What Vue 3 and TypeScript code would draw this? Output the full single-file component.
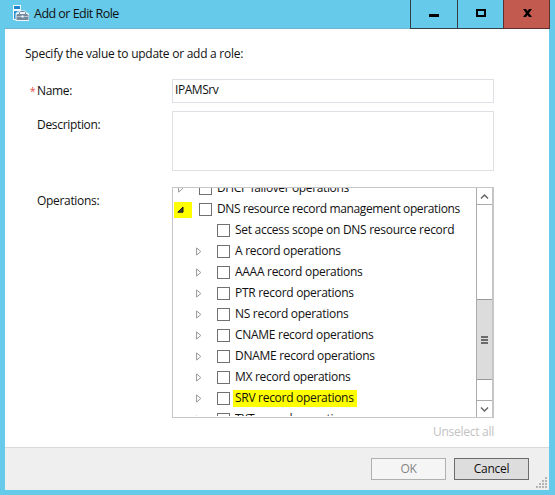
<script setup lang="ts">
import { ref } from 'vue'

interface Operation {
  label: string
  level: 'parent' | 'child'
  state: 'closed' | 'open' | 'leaf'
  marked?: boolean
}

const name = ref('IPAMSrv')
const description = ref('')

const operations: Operation[] = [
  { label: 'DHCP failover operations', level: 'parent', state: 'closed' },
  { label: 'DNS resource record management operations', level: 'parent', state: 'open' },
  { label: 'Set access scope on DNS resource record', level: 'child', state: 'leaf' },
  { label: 'A record operations', level: 'child', state: 'closed' },
  { label: 'AAAA record operations', level: 'child', state: 'closed' },
  { label: 'PTR record operations', level: 'child', state: 'closed' },
  { label: 'NS record operations', level: 'child', state: 'closed' },
  { label: 'CNAME record operations', level: 'child', state: 'closed' },
  { label: 'DNAME record operations', level: 'child', state: 'closed' },
  { label: 'MX record operations', level: 'child', state: 'closed' },
  { label: 'SRV record operations', level: 'child', state: 'closed', marked: true },
  { label: 'TXT record operations', level: 'child', state: 'closed' },
]
</script>

<template>
  <div class="window">
    <header class="titlebar">
      <svg class="app-icon" width="16" height="16" viewBox="0 0 16 16">
        <path d="M0 0H8V6H5L3 9V15H0Z" fill="#f4fbff" />
        <path d="M1 1H7V4H1Z" fill="#1c86d0" />
        <path d="M1 6H5L3 8V14H1Z" fill="#2e91d4" />
        <path d="M2.500 8.500L5.500 7L7.500 5.500H12L13.500 7.500L16 8.500V16H2.500Z" fill="#eef6fa" />
        <path d="M6.500 9V7.500L7.500 6.500H11.500L12.500 7.500V9" fill="none" stroke="#71869b" />
        <path d="M4.500 9H14L15.500 10.500V15H3.500V10Z" fill="#74899e" />
        <path d="M3.500 11.500H15.500" stroke="#c6d2dc" stroke-width=".8" />
        <path d="M8.500 10.500H10.500V12.500H8.500Z" fill="#fff" />
      </svg>
      <h1 class="title">Add or Edit Role</h1>
      <div class="controls">
        <button class="control" aria-label="Minimize">
          <svg width="12" height="12" shape-rendering="crispEdges"><path d="M1 7H11V10H1Z" /></svg>
        </button>
        <button class="control" aria-label="Maximize">
          <svg width="12" height="12" shape-rendering="crispEdges"><path d="M1 2H11V10H1ZM3 4V8H9V4Z" fill-rule="evenodd" /></svg>
        </button>
        <button class="control close" aria-label="Close">
          <svg width="12" height="12"><path d="M2 2H5L6.500 4L8 2H11L8 6L11 10H8L6.500 8L5 10H2L5 6Z" /></svg>
        </button>
      </div>
    </header>

    <main class="body">
      <p class="intro">Specify the value to update or add a role:</p>
      <div class="form">
        <label class="label name-label" for="role-name"><span class="required">*</span>Name:</label>
        <input id="role-name" v-model="name" class="field" type="text" spellcheck="false" />
        <label class="label desc-label" for="role-description">Description:</label>
        <textarea id="role-description" v-model="description" class="field area"></textarea>
        <span class="label ops-label">Operations:</span>
        <div class="tree">
          <ul class="list">
            <li v-for="op in operations" :key="op.label" class="row" :class="op.level">
              <span class="toggle" :class="{ opened: op.state === 'open' }">
                <svg v-if="op.state === 'closed'" width="6" height="9" viewBox="0 0 6 9">
                  <path d="M.6 .9V8.100L4.800 4.500Z" fill="#fff" stroke="#989898" />
                </svg>
                <svg v-else-if="op.state === 'open'" width="7" height="7" viewBox="0 0 7 7">
                  <path d="M.8 6.200H6V1Z" fill="#444" stroke="#161616" />
                </svg>
              </span>
              <span class="check"></span>
              <span class="op" :class="{ marked: op.marked }">{{ op.label }}</span>
            </li>
          </ul>
          <div class="scrollbar">
            <div class="arrow up">
              <svg width="9" height="7"><path d="M1 5.500L4.500 2L8 5.500" /></svg>
            </div>
            <div class="track">
              <div class="thumb"><i></i><i></i><i></i></div>
            </div>
            <div class="arrow down">
              <svg width="9" height="7"><path d="M1 1.500L4.500 5L8 1.500" /></svg>
            </div>
          </div>
        </div>
      </div>
      <div class="unselect"><span>Unselect all</span></div>
    </main>

    <footer class="footer">
      <button class="btn ok" disabled>OK</button>
      <button class="btn cancel">Cancel</button>
      <svg class="grip" width="11" height="11" viewBox="0 0 11 11" fill="#b5b5b5" shape-rendering="crispEdges">
        <path d="M9 0h2v2h-2zM6 3h2v2h-2zM9 3h2v2h-2zM3 6h2v2h-2zM6 6h2v2h-2zM9 6h2v2h-2zM0 9h2v2h-2zM3 9h2v2h-2zM6 9h2v2h-2zM9 9h2v2h-2z" />
      </svg>
    </footer>
  </div>
</template>

<style>
body {
  margin: 0;
  overflow: hidden;
}
</style>

<style scoped>
* {
  box-sizing: border-box;
}
.window {
  width: 555px;
  height: 495px;
  display: flex;
  flex-direction: column;
  padding: 0 6px 5px 5px;
  background: #66caea;
  color: #111;
  font: 12px/16px "Open Sans", "Noto Sans", sans-serif;
  letter-spacing: -0.26px;
}
.titlebar {
  height: 29px;
  flex: none;
  display: flex;
  margin-right: -1px;
  box-shadow: inset 0 -1px #70b2d0;
}
.app-icon {
  flex: none;
  margin: 5px 0 0 8px;
}
.title {
  margin: 4px 0 0 5px;
  font-size: 12.5px;
  line-height: 19px;
  font-weight: 400;
  letter-spacing: -0.52px;
}
.controls {
  display: flex;
  margin-left: auto;
}
.control {
  width: 47px;
  height: 29px;
  padding: 0 0 3px;
  display: flex;
  align-items: center;
  justify-content: center;
  border: solid #333f45;
  border-width: 0 0 1px 1px;
  background: transparent;
}
.control:nth-child(2) {
  width: 46px;
}
.control.close {
  border-right-width: 1px;
  background: #c35a50;
  border-color: #5b302d;
}
.body {
  height: 418px;
  flex: none;
  padding: 16px 55px 0 20px;
  background: #fff;
}
.intro {
  margin: 0;
  height: 34px;
  line-height: 18px;
}
.form {
  display: grid;
  grid-template-columns: 147px 322px;
  grid-template-rows: 24px 60px 231px;
  row-gap: 8px;
}
.label {
  padding-left: 12px;
  letter-spacing: -0.32px;
}
.name-label {
  padding: 4px 0 0 5px;
}
.desc-label {
  padding-top: 6px;
}
.ops-label {
  padding-top: 14px;
}
.required {
  display: inline-block;
  width: 7px;
  font-size: 10px;
  color: #e8483c;
}
.field {
  width: 322px;
  height: 24px;
  padding: 1px 3px 5px 2px;
  border: 1px solid #dfdfe6;
  outline: 0;
  resize: none;
  background: #fff;
  color: inherit;
  font: inherit;
  letter-spacing: -0.45px;
}
.area {
  height: 60px;
}
.tree {
  margin-top: 8px;
  height: 231px;
  display: flex;
  border: 1px solid #c6c6c9;
  padding-right: 0;
}
.list {
  flex: 1;
  height: 228px;
  margin: 0;
  padding: 0;
  overflow: hidden;
  list-style: none;
}
.row {
  height: 21px;
  display: flex;
  align-items: center;
  letter-spacing: -0.29px;
}
.row:first-child {
  margin-top: -10px;
}
.row.parent {
  letter-spacing: -0.37px;
}
.row.child {
  padding-left: 18px;
}
.toggle {
  width: 18px;
  height: 16px;
  margin-left: 1px;
  display: flex;
  align-items: center;
  padding-left: 4px;
}
.toggle.opened {
  padding-left: 3px;
  background: #ff0;
}
.check {
  width: 13px;
  height: 13px;
  margin-left: 7px;
  border: 1px solid #707070;
  background: #fff;
}
.op {
  height: 17px;
  margin-left: 3px;
  padding: 0 3px 0 2px;
  line-height: 16px;
  white-space: nowrap;
}
.marked {
  background: #ff0;
}
.scrollbar {
  width: 17px;
  display: flex;
  flex-direction: column;
  border-left: 1px solid #ababab;
  border-right: 1px solid #c4c4c4;
}
.arrow {
  height: 17px;
  display: flex;
  align-items: center;
  justify-content: center;
  border-bottom: 1px solid #ababab;
}
.arrow path {
  fill: none;
  stroke: #666;
  stroke-width: 1.5;
}
.down {
  border-bottom: 0;
  border-top: 1px solid #ababab;
}
.track {
  flex: 1;
  padding-top: 94px;
}
.thumb {
  height: 81px;
  display: flex;
  flex-direction: column;
  align-items: center;
  justify-content: center;
  gap: 1px;
  border: solid #999;
  border-width: 1px 0;
  background: #dcdcdc;
}
.thumb i {
  width: 7px;
  height: 2px;
  background: #6b6b6b;
}
.unselect {
  margin-top: 14px;
  text-align: right;
  color: #c2c2c2;
}
.footer {
  height: 43px;
  flex: none;
  position: relative;
  display: flex;
  justify-content: flex-end;
  gap: 8px;
  padding: 10px 20px 0 0;
  border-top: 1px solid #d9d9dc;
  background: #efefef;
}
.btn {
  width: 75px;
  height: 22px;
  padding: 0;
  border: 1px solid #b0b0b0;
  background: #f5f5f5;
  color: #858585;
  font: inherit;
  letter-spacing: inherit;
}
.cancel {
  border-color: #6c6c6c;
  background: #ddd;
  color: #111;
}
.grip {
  position: absolute;
  right: 2px;
  bottom: 2px;
}
</style>
